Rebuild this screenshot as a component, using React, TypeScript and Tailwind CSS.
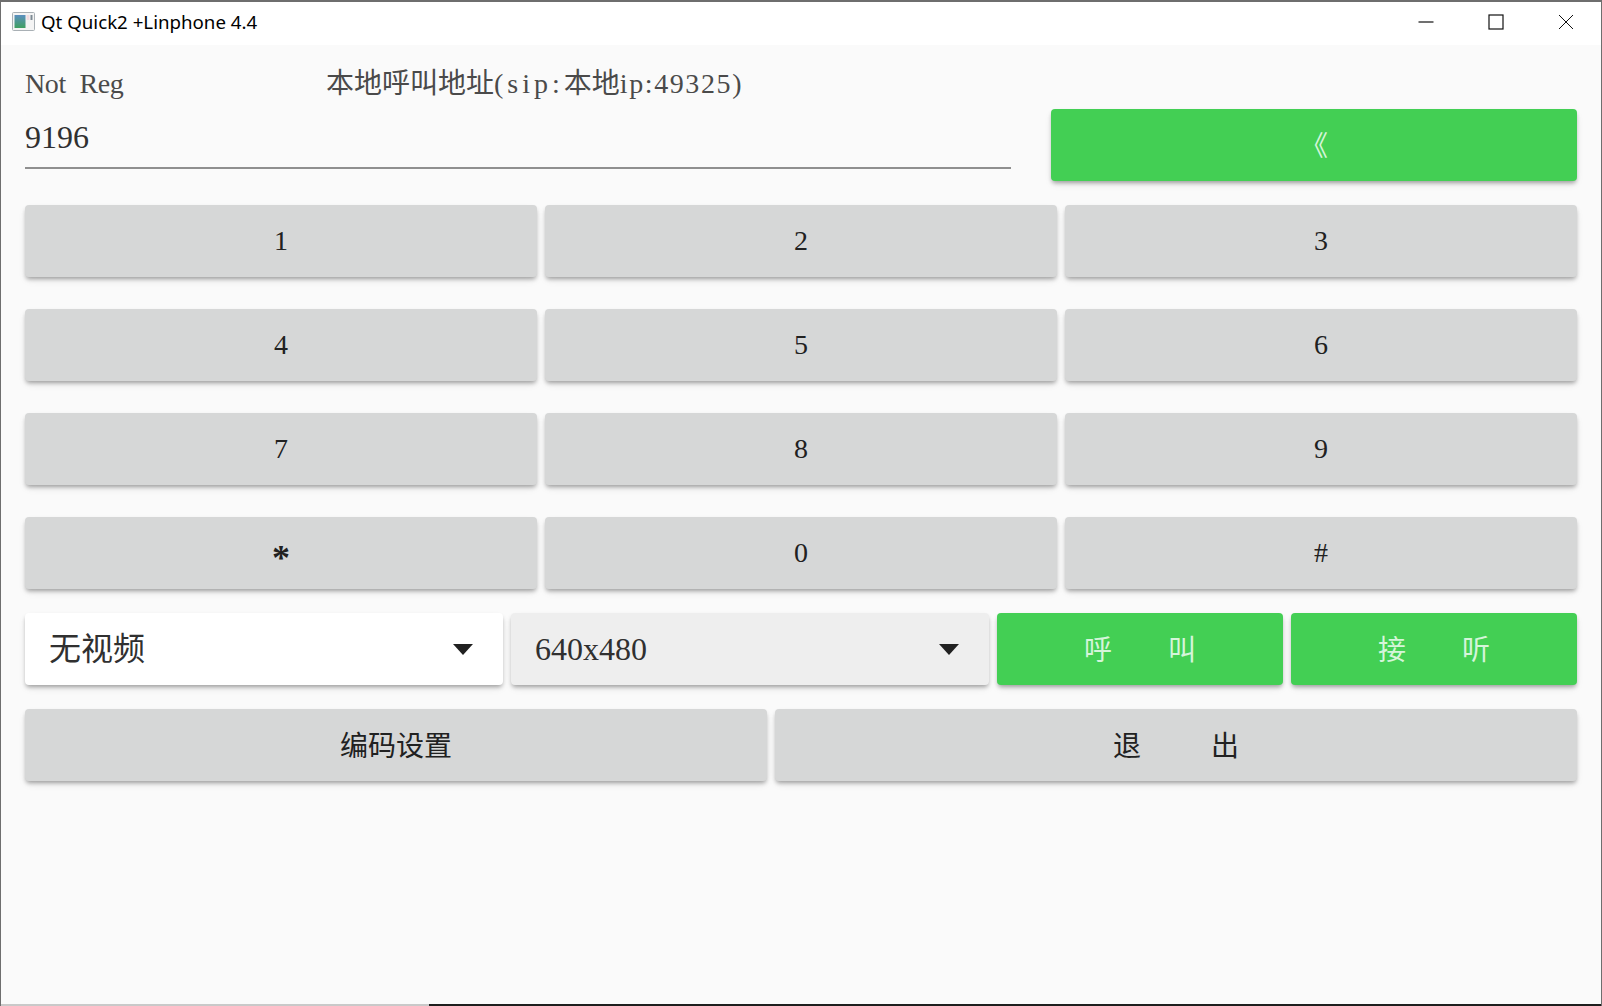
const serif = "font-['Liberation_Serif','Noto_Sans_CJK_SC',serif]";
const raised = "shadow-[0_3px_4px_-1px_rgba(0,0,0,0.32),0_4px_10px_-2px_rgba(0,0,0,0.1)]";

function Btn({ label, className = "" }: { label: string; className?: string }) {
    return (
        <button
            className={`h-[72px] flex items-center justify-center whitespace-pre rounded-[4px] bg-[#d6d7d7] text-[28px] text-[#212121] ${raised} ${serif} ${className}`}
        >
            {label}
        </button>
    );
}

function GreenBtn({ label, className = "" }: { label: string; className?: string }) {
    return (
        <button
            className={`h-[72px] flex items-center justify-center whitespace-pre rounded-[4px] bg-[#43cf54] pt-[4px] text-[28px] text-[#d5f5da] ${raised} ${serif} ${className}`}
        >
            {label}
        </button>
    );
}

function Select({ value, className = "" }: { value: string; className?: string }) {
    return (
        <div
            className={`h-[72px] flex items-center justify-between pl-[24px] pr-[30px] rounded-[4px] text-[32px] text-[#303030] ${raised} ${serif} ${className}`}
        >
            <span>{value}</span>
            <svg width="20" height="11" viewBox="0 0 20 11">
                <path d="M0 0H20L10 11Z" fill="#212121" />
            </svg>
        </div>
    );
}

function AppIcon() {
    return (
        <svg width="23" height="19" viewBox="0 0 23 19">
            <defs>
                <linearGradient id="icon-fill" x1="0" y1="0" x2="0" y2="1">
                    <stop offset="0" stopColor="#5b8fc0" />
                    <stop offset="1" stopColor="#3fa060" />
                </linearGradient>
            </defs>
            <rect x="0.5" y="0.5" width="22" height="18" rx="1" fill="#f4f4f4" stroke="#a9b0b5" />
            <rect x="2.5" y="3" width="11" height="13" fill="url(#icon-fill)" />
            <rect x="14.5" y="3" width="3" height="5" fill="#f0dbe0" />
            <rect x="18.5" y="3" width="2" height="5" fill="#7d8a94" />
        </svg>
    );
}

export default function App() {
    const keys = ["1", "2", "3", "4", "5", "6", "7", "8", "9", "*", "0", "#"];

    return (
        <div className="w-[1602px] h-[1006px] flex flex-col bg-[#fafafa] border-x border-[#6e6e6e] overflow-hidden">
            {/* Title bar */}
            <header className="h-[45px] flex items-center justify-between bg-white border-t-2 border-[#6e6e6e] pb-[3px]">
                <div className="flex items-center pl-[11px]">
                    <AppIcon />
                    <span className="ml-[6px] text-[18.7px] text-black font-['Noto_Sans',sans-serif]">
                        Qt Quick2 +Linphone 4.4
                    </span>
                </div>
                <div className="flex items-center">
                    <div className="w-[70px] flex justify-center">
                        <svg width="16" height="16" viewBox="0 0 16 16">
                            <path d="M0.5 8H15.5" stroke="#111" strokeWidth="1.2" />
                        </svg>
                    </div>
                    <div className="w-[70px] flex justify-center">
                        <svg width="16" height="16" viewBox="0 0 16 16">
                            <rect x="1" y="1" width="14" height="14" fill="none" stroke="#111" strokeWidth="1.2" />
                        </svg>
                    </div>
                    <div className="w-[70px] flex justify-center">
                        <svg width="16" height="16" viewBox="0 0 16 16">
                            <path d="M1 1L15 15M15 1L1 15" stroke="#111" strokeWidth="1" />
                        </svg>
                    </div>
                </div>
            </header>

            <main className="flex-1 px-[24px]">
                {/* Status and number input */}
                <div className="h-[136px] flex">
                    <div className="w-[986px] mr-[40px] pt-[17px]">
                        <div className={`h-[40px] pt-[4px] flex items-center text-[28px] text-[#4a4a4a] ${serif}`}>
                            <span className="w-[301px] tracking-[-0.4px] [word-spacing:7px]">Not Reg</span>
                            <span>
                                本地呼叫地址<span className="tracking-[4px]">(sip:</span>本地
                                <span className="tracking-[1.6px]">ip:49325)</span>
                            </span>
                        </div>
                        <div className={`h-[67px] pt-[15px] border-b-2 border-[#8f8f8f] text-[32px] leading-[40px] text-[#303030] ${serif}`}>
                            9196
                        </div>
                    </div>
                    <GreenBtn label="《" className="mt-[64px] flex-1" />
                </div>

                {/* Keypad */}
                <div className="mt-[24px] grid grid-cols-3 gap-x-[8px] gap-y-[32px]">
                    {keys.map((k) => (
                        <Btn key={k} label={k} className={k === "*" ? "pt-[9px] text-[36px] font-bold" : ""} />
                    ))}
                </div>

                {/* Video options and call buttons */}
                <div className="mt-[24px] flex gap-[8px]">
                    <Select value="无视频" className="w-[478px] bg-white" />
                    <Select value="640x480" className="w-[478px] bg-[#eeeeee]" />
                    <GreenBtn label={"呼        叫"} className="w-[286px]" />
                    <GreenBtn label={"接        听"} className="w-[286px]" />
                </div>

                <div className="mt-[24px] flex gap-[8px]">
                    <Btn label="编码设置" className="w-[742px] pt-[4px]" />
                    <Btn label={"退          出"} className="flex-1 pt-[4px]" />
                </div>
            </main>

            {/* Window bottom edge */}
            <div className="h-[2px] flex">
                <div className="w-[428px] bg-[#c9c9c9]" />
                <div className="flex-1 bg-[#1e1e1e]" />
            </div>
        </div>
    );
}
